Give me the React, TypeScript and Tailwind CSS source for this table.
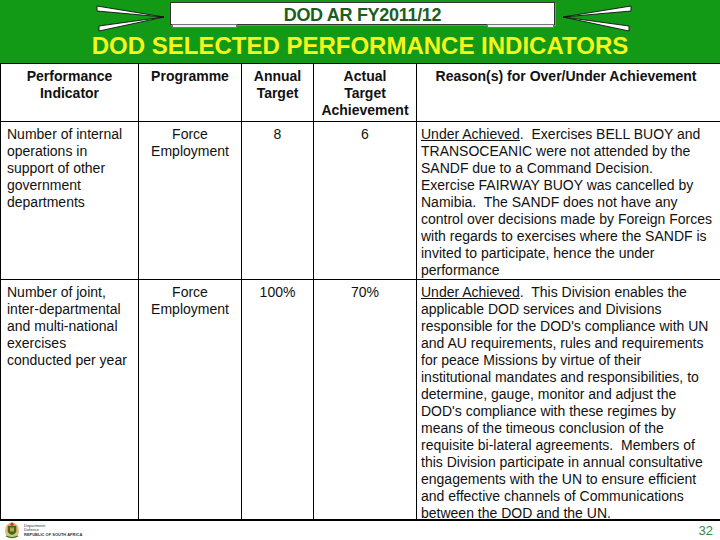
import React from "react";

const font = { fontFamily: '"Liberation Sans", Arial, sans-serif' };

function Lines({ lines }: { lines: React.ReactNode[] }) {
  return (
    <>
      {lines.map((l, i) => (
        <div key={i} className="whitespace-pre">
          {l}
        </div>
      ))}
    </>
  );
}

const row1Reason: React.ReactNode[] = [
  <>
    <span className="underline">Under Achieved</span>.  Exercises BELL BUOY and
  </>,
  "TRANSOCEANIC were not attended by the",
  "SANDF due to a Command Decision.",
  "Exercise FAIRWAY BUOY was cancelled by",
  "Namibia.  The SANDF does not have any",
  "control over decisions made by Foreign Forces",
  "with regards to exercises where the SANDF is",
  "invited to participate, hence the under",
  "performance",
];

const row2Reason: React.ReactNode[] = [
  <>
    <span className="underline">Under Achieved</span>.  This Division enables the
  </>,
  "applicable DOD services and Divisions",
  "responsible for the DOD's compliance with UN",
  "and AU requirements, rules and requirements",
  "for peace Missions by virtue of their",
  "institutional mandates and responsibilities, to",
  "determine, gauge, monitor and adjust the",
  "DOD's compliance with these regimes by",
  "means of the timeous conclusion of the",
  "requisite bi-lateral agreements.  Members of",
  "this Division participate in annual consultative",
  "engagements with the UN to ensure efficient",
  "and effective channels of Communications",
  "between the DOD and the UN.",
];

function LeftTail() {
  return (
    <svg width="74" height="32" viewBox="0 0 74 32" className="shrink-0">
      <polygon points="1,6 68,17 1,11" fill="#ffffff" stroke="#111" strokeWidth="0.9" />
      <polygon points="3,31 68,17 3,26" fill="#ffffff" stroke="#111" strokeWidth="0.9" />
    </svg>
  );
}

function RightTail() {
  return (
    <svg width="77" height="32" viewBox="0 0 77 32" className="shrink-0">
      <polygon points="76,6 8,17 76,11" fill="#ffffff" stroke="#111" strokeWidth="0.9" />
      <polygon points="74,31 8,17 74,26" fill="#ffffff" stroke="#111" strokeWidth="0.9" />
    </svg>
  );
}

function Crest() {
  return (
    <svg width="16" height="17" viewBox="0 0 16 17">
      <ellipse cx="8" cy="8.5" rx="7" ry="8" fill="#d9c27a" />
      <path d="M4 4 L12 4 L12 10 Q8 15 4 10 Z" fill="#2f6b2a" stroke="#7a5a1a" strokeWidth="0.6" />
      <rect x="6" y="5.5" width="4" height="4" fill="#c8a040" />
      <circle cx="8" cy="2.2" r="1.6" fill="#c0392b" />
      <path d="M2 14 Q8 17 14 14" stroke="#3b7a2a" strokeWidth="1.2" fill="none" />
    </svg>
  );
}

export default function App() {
  const cell = "border-r border-b border-black";
  return (
    <div className="w-[720px] h-[540px] bg-white overflow-hidden" style={font}>
      {/* Header */}
      <div className="h-[63px] bg-[#129a16] flex flex-col items-center">
        <div className="h-[30px] flex items-start pl-[8px]">
          <LeftTail />
          <div className="relative w-[385px] h-[23px] mt-[2px] bg-white border border-[#333] shadow-[1px_1px_0_#888] flex justify-center">
            <span className="text-[18px] leading-[23px] pt-[1px] font-bold text-[#1b5e20] tracking-[-0.3px]">
              DOD AR FY2011/12
            </span>
            <div className="absolute left-[1px] top-full w-[65px] h-[4px] bg-[#f2f2f2] border border-[#777]" />
            <div className="absolute right-0 top-full w-[67px] h-[4px] bg-[#f2f2f2] border border-[#777]" />
          </div>
          <RightTail />
        </div>
        <div className="mt-[2px] text-[24px] leading-[28px] font-bold text-[#f6f61e]">
          DOD SELECTED PERFORMANCE INDICATORS
        </div>
      </div>

      {/* Table */}
      <div className="grid grid-cols-[138px_103px_72px_103px_304px] grid-rows-[58px_158px_241px] border-t border-l border-black text-[14px] leading-[17px] text-[#111]">
        {/* header */}
        <div className={`${cell} pt-[4px] text-center font-bold`}>
          <Lines lines={["Performance", "Indicator"]} />
        </div>
        <div className={`${cell} pt-[4px] text-center font-bold`}>Programme</div>
        <div className={`${cell} pt-[4px] text-center font-bold`}>
          <Lines lines={["Annual", "Target"]} />
        </div>
        <div className={`${cell} pt-[4px] text-center font-bold`}>
          <Lines lines={["Actual", "Target", "Achievement"]} />
        </div>
        <div className="border-b border-black pt-[4px] text-center font-bold pr-[6px]">
          Reason(s) for Over/Under Achievement
        </div>

        {/* row 1 */}
        <div className={`${cell} pt-[4px] pl-[6px]`}>
          <Lines lines={["Number of internal", "operations in", "support of other", "government", "departments"]} />
        </div>
        <div className={`${cell} pt-[4px] text-center`}>
          <Lines lines={["Force", "Employment"]} />
        </div>
        <div className={`${cell} pt-[4px] text-center`}>8</div>
        <div className={`${cell} pt-[4px] text-center`}>6</div>
        <div className="border-b border-black pt-[4px] pl-[4px]">
          <Lines lines={row1Reason} />
        </div>

        {/* row 2 */}
        <div className="border-r border-b-2 border-black pt-[4px] pl-[6px]">
          <Lines lines={["Number of joint,", "inter-departmental", "and multi-national", "exercises", "conducted per year"]} />
        </div>
        <div className="border-r border-b-2 border-black pt-[4px] text-center">
          <Lines lines={["Force", "Employment"]} />
        </div>
        <div className="border-r border-b-2 border-black pt-[4px] text-center">100%</div>
        <div className="border-r border-b-2 border-black pt-[4px] text-center">70%</div>
        <div className="border-b-2 border-black pt-[4px] pl-[4px]">
          <Lines lines={row2Reason} />
        </div>
      </div>

      {/* Footer */}
      <div className="flex items-start justify-between pl-[4px] pr-[7px] pt-[1px]">
        <div className="flex items-center gap-[4px]">
          <Crest />
          <div className="text-[4px] leading-[4.5px] text-[#333]">
            <div>Department:</div>
            <div>Defence</div>
            <div className="font-bold">REPUBLIC OF SOUTH AFRICA</div>
          </div>
        </div>
        <div className="text-[13px] leading-[16px] pt-[1px] text-[#2e8b3a]">32</div>
      </div>
    </div>
  );
}
